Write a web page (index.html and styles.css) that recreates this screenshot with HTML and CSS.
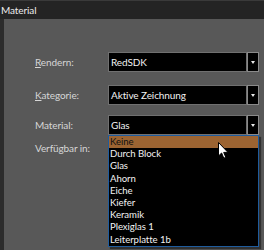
FILE: index.html
```html
<!DOCTYPE html>
<html lang="de">
<head>
  <meta charset="UTF-8" />
  <title>Material</title>
  <link rel="stylesheet" href="styles.css">
</head>
<body>
  <div class="titlebar">Material</div>
  <div class="frame">
    <div class="edge"></div>
    <div class="panel">

      <div class="row first">
        <span class="label"><u>R</u>endern:</span>
        <div class="combo">
          <span class="value">RedSDK</span>
          <span class="arrow"><i></i></span>
        </div>
      </div>

      <div class="row second">
        <span class="label"><u>K</u>ategorie:</span>
        <div class="combo">
          <span class="value">Aktive Zeichnung</span>
          <span class="arrow"><i></i></span>
        </div>
      </div>

      <div class="row third">
        <span class="label">Material:</span>
        <div class="combo open">
          <span class="value">Glas</span>
          <span class="arrow"><i></i></span>
          <!-- open dropdown list -->
          <ul class="list">
            <li class="selected">Keine</li>
            <li>Durch Block</li>
            <li>Glas</li>
            <li>Ahorn</li>
            <li>Eiche</li>
            <li>Kiefer</li>
            <li>Keramik</li>
            <li>Plexiglas 1</li>
            <li>Leiterplatte 1b</li>
          </ul>
          <svg class="cursor" width="12" height="18" viewBox="0 0 12 18">
            <path d="M0.5 0.5 L0.5 14 L3.6 11 L5.8 16.2 L7.8 15.3 L5.7 10.4 L10 10.4 Z" fill="#fff" stroke="#000" stroke-width="1"/>
          </svg>
        </div>
      </div>

      <div class="row fourth">
        <span class="label">Verfügbar in:</span>
      </div>

    </div>
  </div>
</body>
</html>
```

FILE: styles.css
```css
* {
  box-sizing: border-box;
}
html, body {
  margin: 0;
  width: 264px;
  height: 250px;
  overflow: hidden;
}
body {
  font-family: Lato, 'Noto Sans', sans-serif;
  font-size: 10px;
  background: #585858;
  color: #d8d8d8;
}
.titlebar {
  height: 19px;
  line-height: 18px;
  padding-left: 1px;
  background: #242424;
  color: #ececec;
  font-size: 10px;
  letter-spacing: -0.1px;
  border-top: 1px solid #3a3a3a;
}
.frame {
  display: flex;
  height: 231px;
}
.edge {
  width: 4px;
  background: #2c2c2c;
}
.panel {
  flex: 1;
  padding-left: 31px;
  padding-right: 5px;
}
.row {
  display: grid;
  grid-template-columns: 73px 151px;
  align-items: center;
}
.row.first {
  margin-top: 33px;
}
.row.second {
  margin-top: 13px;
}
.row.third {
  margin-top: 10px;
}
.row.fourth {
  margin-top: 7px;
}
.label {
  color: #d6d6d6;
  white-space: nowrap;
  letter-spacing: -0.1px;
}
.label u {
  text-decoration-thickness: 1px;
  text-underline-offset: 1px;
}
.combo {
  position: relative;
  display: flex;
  height: 20px;
}
.value {
  flex: 1;
  background: #000;
  border: 1px solid #707070;
  color: #f2f2f2;
  line-height: 18px;
  padding-left: 2px;
  font-size: 10px;
  letter-spacing: -0.1px;
}
.arrow {
  width: 12px;
  background: #000;
  border: 1px solid #8a8a8a;
  display: flex;
  align-items: center;
  justify-content: center;
}
.arrow i {
  width: 0;
  height: 0;
  border-left: 2.5px solid transparent;
  border-right: 2.5px solid transparent;
  border-top: 3px solid #e8e8e8;
}
.list {
  position: absolute;
  top: 20px;
  left: 0;
  right: 0;
  margin: 0;
  padding: 0;
  list-style: none;
  background: #000;
  border: 1px solid #1f5c9e;
  box-shadow: 2px 2px 1px rgba(0, 0, 0, 0.45);
  z-index: 2;
}
.list li {
  height: 12.2px;
  line-height: 12px;
  padding-left: 1px;
  color: #f2f2f2;
  font-size: 9.6px;
  letter-spacing: -0.05px;
}
.list li.selected {
  background: #9c6432;
  color: #111;
}
.cursor {
  position: absolute;
  left: 110px;
  top: 27px;
  z-index: 3;
}
```
